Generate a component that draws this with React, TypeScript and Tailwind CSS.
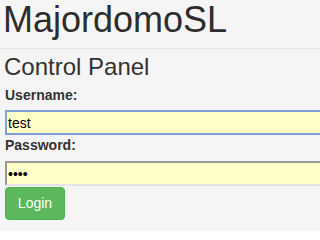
export default function App() {
  return (
    <div className="w-full min-w-[249px] h-[231px] overflow-hidden bg-[#f5f5f5] text-[#333] pl-[5px]" style={{ fontFamily: '"Liberation Sans", Arial, sans-serif' }}>
      {/* page header */}
      <div className="w-[900px] border-b border-[#e5e5e5] pb-[8px] -ml-[5px] pl-[3px]">
        <h1 className="text-[36px] leading-[40px] font-normal text-[#2d2d2d]">MajordomoSL</h1>
      </div>
      <h2 className="mt-[5px] text-[24px] leading-[26px] font-normal -ml-[1px] text-[#333]">Control Panel</h2>

      <form className="mt-[5px] flex flex-col items-start">
        <label className="text-[14px] leading-[20px] font-bold mb-[5px] text-[#333]">Username:</label>
        <input
          type="text"
          value="test"
          readOnly
          className="w-[900px] h-[25px] px-[1px] text-[14px] text-black bg-[#ffffc8] border-2 border-[#7f9fd6] outline-none"
        />
        <label className="text-[14px] leading-[20px] font-bold mb-[6px] text-[#333]">Password:</label>
        <input
          type="password"
          value="abcd"
          readOnly
          className="w-[900px] h-[25px] px-[1px] text-[14px] text-black bg-[#ffffc8] border-2 border-t-[#9a9a9a] border-l-[#9a9a9a] border-b-[#e4e4e4] border-r-[#e4e4e4] outline-none"
        />
        <button
          type="button"
          className="mt-[1px] w-[60px] h-[33px] rounded-[4px] bg-[#5cb85c] border border-[#4cae4c] text-white text-[14px]"
        >
          Login
        </button>
      </form>
    </div>
  );
}
